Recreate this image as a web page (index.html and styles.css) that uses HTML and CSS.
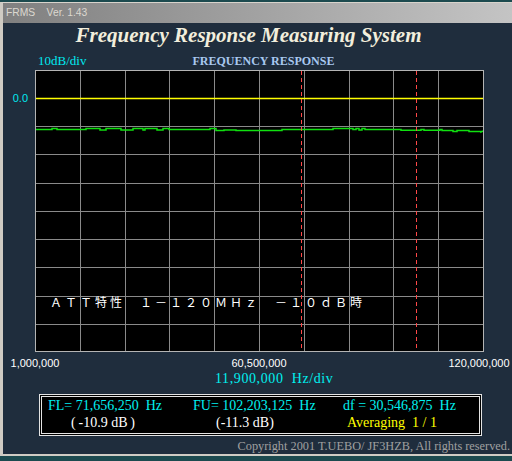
FILE: index.html
```html
<!doctype html>
<html>
<head>
<meta charset="utf-8">
<title>FRMS Ver. 1.43</title>
<link rel="stylesheet" href="styles.css">
</head>
<body>

<div class="desktop">
  <div class="window">
    <div class="caption">FRMS&nbsp;&nbsp;&nbsp; Ver. 1.43</div>
    <div class="client">
      <h1 class="app-title">Frequency Response Measuring System</h1>

      <div class="chart-head">
        <span class="scale-y">10dB/div</span>
        <span class="chart-name">FREQUENCY RESPONSE</span>
      </div>

      <div class="chart-row">
        <div class="y-axis"><span>0.0</span></div>
        <div class="plot">
          <svg width="449" height="282" viewBox="0 0 449 282">
            <rect x="0" y="0" width="449" height="282" fill="#000"/>
            <g stroke="#8a8a8a" stroke-width="1">
              <line x1="45.5" y1="0" x2="45.5" y2="282"/>
              <line x1="90.5" y1="0" x2="90.5" y2="282"/>
              <line x1="134.5" y1="0" x2="134.5" y2="282"/>
              <line x1="179.5" y1="0" x2="179.5" y2="282"/>
              <line x1="224.5" y1="0" x2="224.5" y2="282"/>
              <line x1="269.5" y1="0" x2="269.5" y2="282"/>
              <line x1="314.5" y1="0" x2="314.5" y2="282"/>
              <line x1="358.5" y1="0" x2="358.5" y2="282"/>
              <line x1="403.5" y1="0" x2="403.5" y2="282"/>
              <line x1="0" y1="56.5" x2="449" y2="56.5"/>
              <line x1="0" y1="84.5" x2="449" y2="84.5"/>
              <line x1="0" y1="113.5" x2="449" y2="113.5"/>
              <line x1="0" y1="141.5" x2="449" y2="141.5"/>
              <line x1="0" y1="169.5" x2="449" y2="169.5"/>
              <line x1="0" y1="197.5" x2="449" y2="197.5"/>
              <line x1="0" y1="226.5" x2="449" y2="226.5"/>
              <line x1="0" y1="254.5" x2="449" y2="254.5"/>
            </g>
            <line x1="0" y1="28.5" x2="449" y2="28.5" stroke="#ffff00" stroke-width="1.5"/>
            <!-- 測定値 -->
            <polyline fill="none" stroke="#10e010" stroke-width="1.5"
              points="0,59.5 17,59.5 17,58.5 22,58.5 22,59.5 51,59.5 51,58.5 65,58.5 65,60 71,60 71,58.5 86,58.5 86,60 98,60 98,58.5 108,58.5 108,60 110,60 110,58.5 122,58.5 122,60 128,60 128,58.5 134,58.5 134,59.5 175,59.5 175,58.5 181,58.5 181,60.5 189,60.5 189,60 201,60 201,60.5 247,60.5 247,59.5 298,59.5 298,58.5 318,58.5 318,59.5 321,59.5 321,58.5 324,58.5 324,60 327,60 327,58.5 330,58.5 330,59.5 366,59.5 366,60.2 386,60.2 386,59.5 389,59.5 389,60.2 405,60.2 405,59.5 407,59.5 407,60.5 418,60.5 418,61.5 422,61.5 422,60.5 434,60.5 434,61.5 446,61.5 446,62 448,61"/>
            <!-- マーカー FL / FU -->
            <g stroke="#ff4848" stroke-width="1" stroke-dasharray="4 3">
              <line x1="266.5" y1="1" x2="266.5" y2="281"/>
              <line x1="381.5" y1="1" x2="381.5" y2="281"/>
            </g>
            <rect x="0.5" y="0.5" width="448" height="281" fill="none" stroke="#b4b4b4"/>
          </svg>
          <div class="memo">ＡＴＴ特性　１－１２０ＭＨｚ　－１０ｄＢ時</div>
        </div>
      </div>

      <div class="x-axis">
        <span>1,000,000</span>
        <span>60,500,000</span>
        <span>120,000,000</span>
      </div>
      <div class="scale-x">11,900,000&nbsp; Hz/div</div>

      <div class="readout">
        <span class="cyan">FL= 71,656,250&nbsp; Hz</span>
        <span class="cyan">FU= 102,203,125&nbsp; Hz</span>
        <span class="cyan">df = 30,546,875&nbsp; Hz</span>
        <span class="white sub">(&thinsp;-10.9 dB&thinsp;)</span>
        <span class="white sub">(-11.3 dB)</span>
        <span class="yellow avg">Averaging&nbsp; 1 / 1</span>
      </div>

      <div class="copyright">Copyright 2001 T.UEBO/ JF3HZB, All rights reserved.</div>
    </div>
  </div>
</div>

</body>
</html>
```

FILE: styles.css
```css
html, body{
    margin: 0;
    padding: 0;
}
body{
    width: 512px;
    height: 461px;
    overflow: hidden;
    background-color: #1c4a4f;
}
.desktop{
    padding-top: 2px;
}
.window{
    border-top: 1px solid #d8d4cc;
    border-left: 3px solid #cfcbc3;
    border-bottom: 2px solid #d0ccc4;
    background-color: #1f2d3d;
}
.caption{
    height: 20px;
    line-height: 20px;
    padding-left: 3px;
    background: linear-gradient(to right, #808080, #c4c4c4);
    color: #dcd8d0;
    font-family: "Liberation Sans", Arial, sans-serif;
    font-size: 10.3px;
}
.client{
    height: 431px;
    position: relative;
}
.app-title{
    margin: 0;
    height: 24px;
    line-height: 24px;
    padding-right: 18px;
    text-align: center;
    font-family: "Liberation Serif", "Times New Roman", serif;
    font-size: 21px;
    font-weight: bold;
    font-style: italic;
    color: #f2eedc;
}
.chart-head{
    display: grid;
    width: 449px;
    height: 23px;
    margin-left: 32px;
    align-items: end;
}
.chart-head > span{
    grid-area: 1 / 1;
    line-height: 14px;
    padding-bottom: 2px;
}
.scale-y{
    justify-self: start;
    padding-left: 3px;
    color: #00e8f0;
    font-family: "Liberation Serif", serif;
    font-size: 13px;
}
.chart-name{
    justify-self: center;
    padding-left: 8px;
    color: #a8c8f0;
    font-family: "Liberation Serif", serif;
    font-size: 12px;
    font-weight: bold;
}
.chart-row{
    display: flex;
}
.y-axis{
    width: 32px;
    box-sizing: border-box;
    padding-top: 22px;
    padding-right: 7px;
    text-align: right;
    color: #00e8f0;
    font-family: "Liberation Sans", sans-serif;
    font-size: 11px;
    line-height: 13px;
}
.plot{
    position: relative;
    width: 449px;
    height: 282px;
}
.plot svg{
    display: block;
}
.memo{
    position: absolute;
    left: 15px;
    top: 226px;
    color: #ffffff;
    font-family: "Noto Sans CJK JP", sans-serif;
    font-size: 12px;
    line-height: 12px;
    letter-spacing: 3px;
    white-space: nowrap;
}
.x-axis{
    display: grid;
    grid-template-columns: 64px 384px 56px;
    height: 14px;
    padding-top: 4px;
    color: #ffffff;
    font-family: "Liberation Sans", sans-serif;
    font-size: 11px;
    line-height: 14px;
}
.x-axis > span{
    justify-self: center;
    white-space: nowrap;
}
.scale-x{
    padding-left: 212px;
    height: 20px;
    line-height: 18px;
    color: #00f0f0;
    font-family: "Liberation Serif", serif;
    font-size: 14px;
    letter-spacing: 0.6px;
}
.readout{
    display: grid;
    grid-template-columns: 145px 150px 1fr;
    width: 431px;
    margin-left: 36px;
    margin-top: 4px;
    padding: 0 0 2px 6px;
    border: 3px double #e4e4e4;
    background-color: #000000;
    font-family: "Liberation Serif", serif;
    font-size: 14px;
    line-height: 17px;
    white-space: nowrap;
}
.readout .sub{
    padding-left: 23px;
}
.readout .avg{
    padding-left: 4px;
}
.cyan{
    color: #00f0f0;
}
.white{
    color: #ffffff;
}
.yellow{
    color: #ffff00;
}
.copyright{
    padding-top: 2px;
    padding-right: 2px;
    text-align: right;
    color: #a0a0a0;
    font-family: "Liberation Serif", serif;
    font-size: 12.3px;
    line-height: 17px;
}
```
